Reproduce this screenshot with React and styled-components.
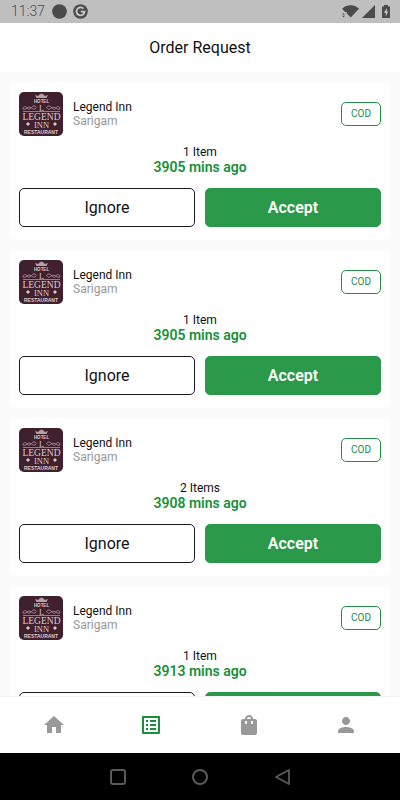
import React from "react";
import styled, { createGlobalStyle } from "styled-components";

const GlobalStyle = createGlobalStyle`
  * { box-sizing: border-box; }
  body { margin: 0; background: #fafafa; font-family: Roboto, "Liberation Sans", sans-serif; color: #111; }
  button { font-family: inherit; cursor: pointer; }
`;

const Screen = styled.div`
  display: flex;
  flex-direction: column;
  height: 100vh;
`;

const StatusBar = styled.div`
  display: flex;
  align-items: center;
  justify-content: space-between;
  flex: none;
  height: 23px;
  padding: 0 10px 0 11px;
  background: #bfbfbf;
  color: #4b4b4b;
`;

const StatusGroup = styled.div`
  display: flex;
  align-items: center;
  gap: ${(p) => p.$gap}px;
`;

const Clock = styled.span`
  margin-right: 1px;
  font-family: Roboto, "Open Sans", sans-serif;
  font-size: 14px;
  font-weight: 300;
  line-height: 23px;
`;

const Header = styled.header`
  flex: none;
  padding: 15px;
  background: #fff;
  text-align: center;
`;

const Title = styled.h1`
  margin: 0;
  font-size: 16px;
  font-weight: 400;
  line-height: 19px;
`;

const OrderList = styled.main`
  display: flex;
  flex: 1;
  flex-direction: column;
  gap: 10px;
  min-height: 0;
  padding: 10px;
  overflow-y: auto;
  scrollbar-width: none;
`;

const Card = styled.article`
  flex: none;
  padding: 10px 9px 13px;
  border-radius: 4px;
  background: #fff;
`;

const Merchant = styled.div`
  display: flex;
  align-items: center;
  gap: 10px;
`;

const MerchantText = styled.div`
  flex: 1;
  font-size: 12px;
  line-height: 14px;
`;

const MerchantName = styled.h2`
  margin: 0;
  font-size: inherit;
  font-weight: 400;
`;

const Place = styled.div`
  color: #979797;
`;

const PaymentTag = styled.span`
  padding: 0 9px;
  border: 1px solid #2a8a47;
  border-radius: 5px;
  color: #2a8a47;
  font-size: 10px;
  line-height: 22px;
`;

const Summary = styled.div`
  padding: 9px 0 13px;
  text-align: center;
`;

const ItemCount = styled.div`
  font-size: 12px;
  line-height: 14px;
`;

const Age = styled.div`
  color: #179039;
  font-size: 14px;
  font-weight: 600;
  line-height: 16px;
`;

const Actions = styled.div`
  display: grid;
  grid-template-columns: 1fr 1fr;
  gap: 10px;
`;

const ActionButton = styled.button`
  height: 39px;
  padding: 0;
  border: 1px solid ${(p) => (p.$primary ? "#2b994a" : "#1a1a1a")};
  border-radius: 5px;
  background: ${(p) => (p.$primary ? "#2b994a" : "#fff")};
  color: ${(p) => (p.$primary ? "#fff" : "#111")};
  font-size: 16px;
  font-weight: ${(p) => (p.$primary ? 600 : 400)};
`;

const TabBar = styled.nav`
  display: grid;
  grid-template-columns: repeat(4, 1fr);
  flex: none;
  height: 57px;
  padding: 0 5px;
  border-top: 1px solid #f3f3f3;
  background: #fff;
`;

const Tab = styled.button`
  display: flex;
  align-items: center;
  justify-content: center;
  padding: 0;
  border: 0;
  background: none;
  color: ${(p) => (p.$active ? "#188f3b" : "#999")};
`;

const SystemBar = styled.div`
  display: flex;
  align-items: center;
  justify-content: center;
  gap: 58px;
  flex: none;
  height: 47px;
  background: #000;
`;

const SystemButton = styled.button`
  display: flex;
  padding: 0;
  border: 0;
  background: none;
  color: #5a5a5a;
`;

const LogoSvg = styled.svg`
  display: block;
  flex: none;
  border-radius: 5px;
`;

function Logo() {
  return (
    <LogoSvg width="44" height="44" viewBox="0 0 44 44" role="img" aria-label="Hotel Legend Inn Restaurant">
      <rect width="44" height="44" fill="#41202e" />
      <g fill="#d6ccd0" textAnchor="middle" fontFamily="Liberation Serif, serif">
        <path d="M16 3l3 1 1.500-1.500L22.500 1.500l2 1L26 4 29 3l-1.500 3h-10z" opacity=".75" />
        <text x="22.500" y="11" fontSize="4.500" fontWeight="700" fontFamily="Liberation Sans, sans-serif">HOTEL</text>
        <text x="22.500" y="18.500" fontSize="8">L</text>
        <text x="22.500" y="27.500" fontSize="9.500">LEGEND</text>
        <text x="22.500" y="35.500" fontSize="8.500">INN</text>
        <text x="22" y="42" fontSize="5" fontWeight="700" fontFamily="Liberation Sans, sans-serif">RESTAURANT</text>
        <path d="M9 30l2 2-2 2-2-2zM36 30l2 2-2 2-2-2z" />
      </g>
      <g fill="none" stroke="#a8979f" strokeWidth=".8">
        <path d="M4 17c0-3 3-3 4-1s4 1 5-1 5-1 4 1-3 1-4 0-4-1-5 0-3 2-4 1" />
        <path d="M41 17c0-3-3-3-4-1s-4 1-5-1-5-1-4 1 3 1 4 0 4-1 5 0 3 2 4 1" />
        <path d="M4 19.500h37" />
      </g>
    </LogoSvg>
  );
}

function Icon({ d, size = 24 }) {
  return (
    <svg width={size} height={size} viewBox="0 0 24 24" fill="currentColor" aria-hidden="true">
      <path d={d} />
    </svg>
  );
}

const tabs = [
  { label: "Home", d: "M10 20v-6h4v6h5v-8h3L12 3 2 12h3v8z" },
  {
    label: "Orders",
    active: true,
    d: "M19 5v14H5V5h14m1.100-2H3.900c-.5 0-.9.4-.9.9v16.200c0 .4.4.9.9.9h16.200c.4 0 .9-.5.9-.9V3.900c0-.5-.5-.9-.9-.9zM11 7h6v2h-6V7zm0 4h6v2h-6v-2zm0 4h6v2h-6zM7 7h2v2H7zm0 4h2v2H7zm0 4h2v2H7z",
  },
  {
    label: "Bag",
    d: "M18 6h-2c0-2.210-1.790-4-4-4S8 3.790 8 6H6c-1.100 0-2 .9-2 2v12c0 1.100.9 2 2 2h12c1.100 0 2-.9 2-2V8c0-1.100-.9-2-2-2zm-8 4c0 .55-.45 1-1 1s-1-.45-1-1V8h2v2zm2-6c1.100 0 2 .9 2 2h-4c0-1.100.9-2 2-2zm4 6c0 .55-.45 1-1 1s-1-.45-1-1V8h2v2z",
  },
  {
    label: "Profile",
    d: "M12 12c2.210 0 4-1.790 4-4s-1.790-4-4-4-4 1.790-4 4 1.790 4 4 4zm0 2c-2.670 0-8 1.340-8 4v2h16v-2c0-2.660-5.330-4-8-4z",
  },
];

const orders = [
  { id: 1, count: "1 Item", age: "3905 mins ago" },
  { id: 2, count: "1 Item", age: "3905 mins ago" },
  { id: 3, count: "2 Items", age: "3908 mins ago" },
  { id: 4, count: "1 Item", age: "3913 mins ago" },
];

function OrderCard({ count, age }) {
  return (
    <Card>
      <Merchant>
        <Logo />
        <MerchantText>
          <MerchantName>Legend Inn</MerchantName>
          <Place>Sarigam</Place>
        </MerchantText>
        <PaymentTag>COD</PaymentTag>
      </Merchant>
      <Summary>
        <ItemCount>{count}</ItemCount>
        <Age>{age}</Age>
      </Summary>
      <Actions>
        <ActionButton type="button">Ignore</ActionButton>
        <ActionButton type="button" $primary>Accept</ActionButton>
      </Actions>
    </Card>
  );
}

export default function App() {
  return (
    <Screen>
      <GlobalStyle />
      <StatusBar>
        <StatusGroup $gap={6}>
          <Clock>11:37</Clock>
          <svg width="15" height="15" viewBox="0 0 15 15" aria-hidden="true">
            <circle cx="7.500" cy="7.500" r="7.300" fill="#4b4b4b" />
          </svg>
          <svg width="15" height="15" viewBox="0 0 15 15" aria-hidden="true">
            <circle cx="7.500" cy="7.500" r="7.300" fill="#4b4b4b" />
            <path d="M10.500 4.700A4 4 0 1 0 11.500 7.700H7.800" fill="none" stroke="#c8c8c8" strokeWidth="1.800" />
          </svg>
        </StatusGroup>
        <StatusGroup $gap={3}>
          <svg width="17" height="13" viewBox="0 0 17 13" fill="#4b4b4b" aria-hidden="true">
            <path d="M0 3.800C5-.8 12-.8 17 3.800L8.700 12.500 4.800 8.500V7H3z" />
            <path d="M0 9.500l1.500-1.500L3 9.500zM0 10.800h3l-1.500 1.500z" />
          </svg>
          <svg width="13" height="13" viewBox="0 0 13 13" fill="#4b4b4b" aria-hidden="true">
            <path d="M13 0v13H0z" />
          </svg>
          <svg width="12" height="13" viewBox="0 0 12 13" aria-hidden="true">
            <path d="M4 1.500h2V0h4v1.500h2V13H4z" fill="#4b4b4b" />
            <path d="M8.800 3L6 7.700h1.700V11.500L10.300 6.500h-1.500z" fill="#c8c8c8" />
          </svg>
        </StatusGroup>
      </StatusBar>
      <Header>
        <Title>Order Request</Title>
      </Header>
      <OrderList>
        {orders.map((order) => (
          <OrderCard key={order.id} count={order.count} age={order.age} />
        ))}
      </OrderList>
      <TabBar>
        {tabs.map((tab) => (
          <Tab key={tab.label} type="button" aria-label={tab.label} $active={tab.active}>
            <Icon d={tab.d} />
          </Tab>
        ))}
      </TabBar>
      <SystemBar>
        <SystemButton type="button" aria-label="Recent apps">
          <svg width="24" height="24" viewBox="0 0 24 24" fill="none" stroke="currentColor" strokeWidth="2">
            <rect x="5" y="5" width="14" height="14" rx="2" />
          </svg>
        </SystemButton>
        <SystemButton type="button" aria-label="Home screen">
          <svg width="24" height="24" viewBox="0 0 24 24" fill="none" stroke="currentColor" strokeWidth="2">
            <circle cx="12" cy="12" r="7" />
          </svg>
        </SystemButton>
        <SystemButton type="button" aria-label="Back">
          <svg width="24" height="24" viewBox="0 0 24 24" fill="none" stroke="currentColor" strokeWidth="1.800" strokeLinejoin="round">
            <path d="M19 5v14L6 12z" />
          </svg>
        </SystemButton>
      </SystemBar>
    </Screen>
  );
}
